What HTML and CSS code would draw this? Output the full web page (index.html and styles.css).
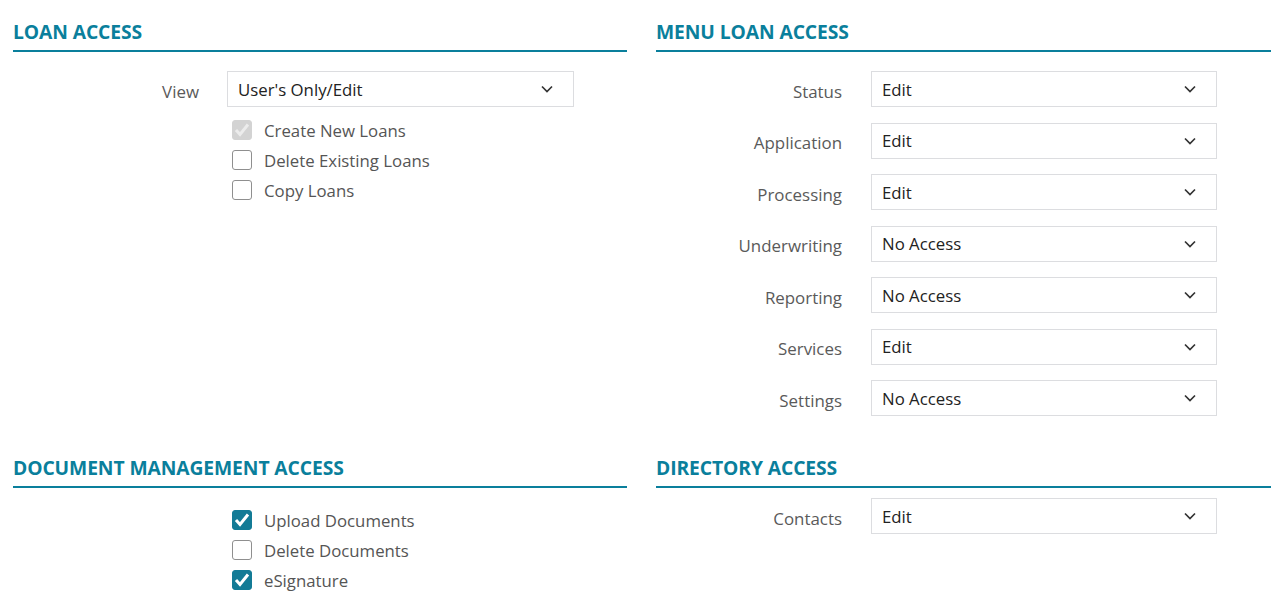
FILE: index.html
```html
<!DOCTYPE html>
<html lang="en">
<head>
    <meta charset="UTF-8">
    <title>User Permissions</title>
    <link rel="stylesheet" href="styles.css">
</head>
<body>
    <div class="permissions">
        <section class="panel">
            <h2 class="panel-title">LOAN ACCESS</h2>
            <div class="field-row">
                <label class="field-label">View</label>
                <div class="select">
                    <span>User's Only/Edit</span>
                    <svg class="chevron" viewBox="0 0 12 8"><path d="M1 1.5 L6 6.5 L11 1.5"/></svg>
                </div>
            </div>
            <div class="checks">
                <label class="check"><span class="box disabled"><svg viewBox="0 0 20 20"><path d="M4 10 L8 14.5 L16 4.5"/></svg></span>Create New Loans</label>
                <label class="check"><span class="box"></span>Delete Existing Loans</label>
                <label class="check"><span class="box"></span>Copy Loans</label>
            </div>
        </section>

        <section class="panel">
            <h2 class="panel-title">MENU LOAN ACCESS</h2>
            <div class="field-list">
                <div class="field-row">
                    <label class="field-label">Status</label>
                    <div class="select"><span>Edit</span><svg class="chevron" viewBox="0 0 12 8"><path d="M1 1.5 L6 6.5 L11 1.5"/></svg></div>
                </div>
                <div class="field-row">
                    <label class="field-label">Application</label>
                    <div class="select"><span>Edit</span><svg class="chevron" viewBox="0 0 12 8"><path d="M1 1.5 L6 6.5 L11 1.5"/></svg></div>
                </div>
                <div class="field-row">
                    <label class="field-label">Processing</label>
                    <div class="select"><span>Edit</span><svg class="chevron" viewBox="0 0 12 8"><path d="M1 1.5 L6 6.5 L11 1.5"/></svg></div>
                </div>
                <div class="field-row">
                    <label class="field-label">Underwriting</label>
                    <div class="select"><span>No Access</span><svg class="chevron" viewBox="0 0 12 8"><path d="M1 1.5 L6 6.5 L11 1.5"/></svg></div>
                </div>
                <div class="field-row">
                    <label class="field-label">Reporting</label>
                    <div class="select"><span>No Access</span><svg class="chevron" viewBox="0 0 12 8"><path d="M1 1.5 L6 6.5 L11 1.5"/></svg></div>
                </div>
                <div class="field-row">
                    <label class="field-label">Services</label>
                    <div class="select"><span>Edit</span><svg class="chevron" viewBox="0 0 12 8"><path d="M1 1.5 L6 6.5 L11 1.5"/></svg></div>
                </div>
                <div class="field-row">
                    <label class="field-label">Settings</label>
                    <div class="select"><span>No Access</span><svg class="chevron" viewBox="0 0 12 8"><path d="M1 1.5 L6 6.5 L11 1.5"/></svg></div>
                </div>
            </div>
        </section>

        <section class="panel">
            <h2 class="panel-title">DOCUMENT MANAGEMENT ACCESS</h2>
            <div class="checks checks-docs">
                <label class="check"><span class="box checked"><svg viewBox="0 0 20 20"><path d="M4 10 L8 14.5 L16 4.5"/></svg></span>Upload Documents</label>
                <label class="check"><span class="box"></span>Delete Documents</label>
                <label class="check"><span class="box checked"><svg viewBox="0 0 20 20"><path d="M4 10 L8 14.5 L16 4.5"/></svg></span>eSignature</label>
            </div>
        </section>

        <section class="panel">
            <h2 class="panel-title">DIRECTORY ACCESS</h2>
            <div class="field-list field-list-tight">
                <div class="field-row">
                    <label class="field-label">Contacts</label>
                    <div class="select"><span>Edit</span><svg class="chevron" viewBox="0 0 12 8"><path d="M1 1.5 L6 6.5 L11 1.5"/></svg></div>
                </div>
            </div>
        </section>
    </div>
</body>
</html>
```

FILE: styles.css
```css
body {
    margin: 0;
    padding: 0;
    background-color: #ffffff;
    font-family: "Open Sans", "Liberation Sans", sans-serif;
    color: #555555;
}
.permissions {
    display: grid;
    grid-template-columns: 614px 615px;
    column-gap: 29px;
    row-gap: 40px;
    padding: 20px 13px 0 13px;
}
.panel-title {
    margin: 0;
    padding-bottom: 6px;
    border-bottom: 2px solid #0a7f9c;
    color: #0a7f9c;
    font-size: 19.3px;
    line-height: 24px;
    font-weight: 700;
    letter-spacing: -0.1px;
}
.field-list {
    display: flex;
    flex-direction: column;
    gap: 15.5px;
    margin-top: 19px;
}
.field-list-tight {
    margin-top: 10px;
}
.panel > .field-row {
    margin-top: 19px;
}
.field-row {
    display: flex;
    align-items: center;
}
.field-label {
    width: 186px;
    margin-right: 28px;
    padding-top: 4px;
    text-align: right;
    font-size: 16.9px;
    color: #5a5a5a;
}
.panel:nth-child(even) .field-label {
    margin-right: 29px;
}
.select {
    width: 347px;
    height: 36px;
    box-sizing: border-box;
    border: 1px solid #dcdde0;
    display: flex;
    align-items: center;
    justify-content: space-between;
    padding: 0 20px 0 10px;
    font-size: 16.8px;
    color: #222222;
}
.panel:nth-child(even) .select {
    width: 346px;
}
.chevron {
    width: 12px;
    height: 8px;
    fill: none;
    stroke: #333333;
    stroke-width: 1.7;
}
.checks {
    display: flex;
    flex-direction: column;
    margin: 8px 0 0 219px;
}
.checks-docs {
    margin-top: 17px;
}
.check {
    display: flex;
    align-items: center;
    height: 30px;
    font-size: 16.8px;
    color: #555555;
}
.box {
    width: 20px;
    height: 20px;
    box-sizing: border-box;
    border: 1.5px solid #8f8f8f;
    border-radius: 3px;
    margin-right: 12px;
    display: flex;
    align-items: center;
    justify-content: center;
}
.box svg {
    width: 20px;
    height: 20px;
    flex-shrink: 0;
    fill: none;
    stroke: #ffffff;
    stroke-width: 3;
}
.box.checked {
    background-color: #137b96;
    border-color: #137b96;
}
.box.disabled {
    background-color: #d3d3d3;
    border-color: #d3d3d3;
}
.box.disabled svg {
    stroke: #ececec;
}
```
